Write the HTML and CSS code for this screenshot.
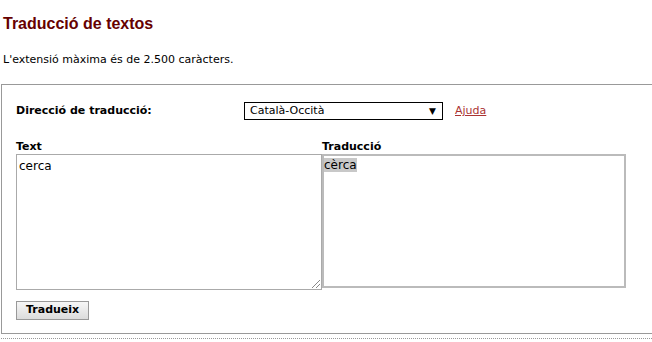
FILE: index.html
```html
<!DOCTYPE html>
<html lang="ca">
<head>
    <meta charset="UTF-8">
    <title>Traducció de textos</title>
    <link rel="stylesheet" href="styles.css">
</head>
<body>
    <h1 class="title">Traducció de textos</h1>
    <p class="note">L'extensió màxima és de 2.500 caràcters.</p>
    <div class="frame">
        <div class="dir-row">
            <label class="dir-label" for="dir">Direcció de traducció:</label>
            <div class="select">
                <span>Català-Occità</span>
                <span class="arrow">▼</span>
            </div>
            <a class="help" href="#">Ajuda</a>
        </div>
        <div class="cols">
            <div class="col">
                <div class="col-label">Text</div>
                <div class="src">cerca<span class="grip"></span></div>
            </div>
            <div class="col">
                <div class="col-label">Traducció</div>
                <div class="dst"><span class="hl">cèrca</span></div>
            </div>
        </div>
        <div class="btn">Tradueix</div>
    </div>
    <div class="dots"></div>
</body>
</html>
```

FILE: styles.css
```css
* {
    box-sizing: border-box;
}
body {
    margin: 0;
    padding: 0 0 0 1px;
    background-color: white;
    font-family: "DejaVu Sans", Verdana, sans-serif;
    font-size: 11px;
    color: black;
    width: 680px;
}
.title {
    margin: 0;
    padding: 15px 0 0 2px;
    font-family: "Liberation Sans", Arial, sans-serif;
    font-size: 16px;
    font-weight: bold;
    color: #660000;
    height: 53px;
}
.note {
    margin: 0 0 0 2px;
    height: 31px;
}
.frame {
    border: 1px solid #999;
    height: 250px;
    padding: 16px 0 0 14px;
}
.dir-row {
    display: flex;
    align-items: center;
    height: 19px;
}
.dir-label {
    font-weight: bold;
    width: 228px;
}
.select {
    width: 199px;
    height: 18px;
    border: 1px solid black;
    display: flex;
    justify-content: space-between;
    align-items: center;
    padding: 0 6px 0 5px;
}
.select .arrow {
    font-size: 9px;
}
.help {
    margin-left: 12px;
    color: #aa3333;
}
.cols {
    display: flex;
    margin-top: 20px;
}
.col-label {
    font-weight: bold;
    height: 14px;
}
.src {
    position: relative;
    width: 306px;
    height: 136px;
    border: 1px solid #aaa;
    padding: 4px 2px;
    font-size: 12px;
}
.grip {
    position: absolute;
    right: 1px;
    bottom: 1px;
    width: 8px;
    height: 8px;
    background: linear-gradient(135deg, transparent 45%, #888 45%, #888 55%, transparent 55%, transparent 70%, #888 70%, #888 80%, transparent 80%);
}
.dst {
    width: 304px;
    height: 134px;
    border: 2px solid #bbb;
    padding: 2px 0;
    font-size: 12px;
}
.hl {
    background-color: #c8c8c8;
}
.btn {
    display: inline-block;
    margin-top: 11px;
    border: 1px solid #999;
    background: linear-gradient(#f6f6f6, #dcdcdc);
    font-weight: bold;
    font-size: 11px;
    padding: 1px 9px;
    height: 19px;
}
.dots {
    margin-top: 4px;
    border-top: 1px dotted #999;
}
```
